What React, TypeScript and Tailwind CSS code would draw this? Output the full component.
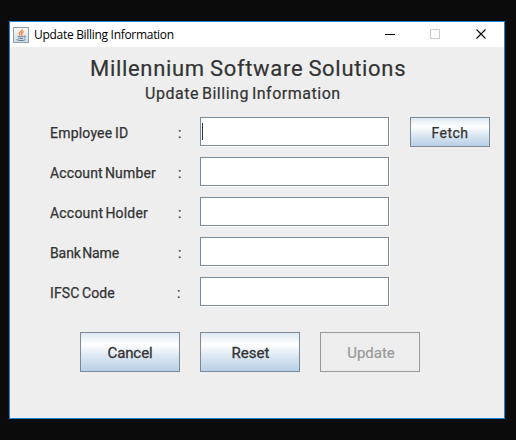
import React from "react";

type Field = { label: string; spacing: string; colon: string; focused?: boolean };

const fields: Field[] = [
  { label: "Employee ID", spacing: "tracking-[0.2px] [word-spacing:-1px]", colon: "w-[128px]", focused: true },
  { label: "Account Number", spacing: "tracking-[0.15px] [word-spacing:-1.5px]", colon: "w-[128px]" },
  { label: "Account Holder", spacing: "tracking-[0.2px] [word-spacing:-1.5px]", colon: "w-[128px]" },
  { label: "Bank Name", spacing: "tracking-[-0.1px] [word-spacing:-2px]", colon: "w-[128px]" },
  { label: "IFSC Code", spacing: "tracking-[0.1px] [word-spacing:-1px]", colon: "w-[127px]" },
];

const metal =
  "border border-[#7a8a99] bg-[linear-gradient(to_bottom,#dde8f3_0%,#ffffff_30%,#dde8f3_60%,#b8cfe5_100%)]";

function JavaIcon() {
  return (
    <svg className="block h-4 w-4" viewBox="0 0 16 16" fill="none">
      <defs>
        <linearGradient id="tile" x1="0" y1="0" x2="0" y2="1">
          <stop offset="0" stopColor="#fafafa" />
          <stop offset="1" stopColor="#d3dbe1" />
        </linearGradient>
      </defs>
      <rect x="0.5" y="0.5" width="15" height="15" fill="url(#tile)" stroke="#8c9fae" />
      <path d="M9.400 2.300C9.800 4 6 4.800 6.200 6.500c.1.8.9 1.200 1.300 1.900M10.700 4.600C8.800 5.400 8 6.200 8.800 7.200c.4.5.3.9-.2 1.400" stroke="#ee7d2d" strokeWidth="1.300" />
      <path d="M4.500 9.300c1.500.7 4.500.7 6.200 0M5.300 11.200c1.500.5 3.500.5 4.800 0M3.500 12.600c2 1.200 7 1.200 8.900.1M11 9c1.800-.5 2.300 1.200.2 2" stroke="#567b98" />
    </svg>
  );
}

export default function App() {
  return (
    <div className="h-[440px] w-[516px] overflow-hidden bg-[#0b0b0b] pt-[21px] pl-[9px] font-['Roboto',sans-serif] text-[#333333]">
      <div className="flex h-[398px] w-[496px] flex-col border border-[#1883d7] bg-[#eeeeee]">
        <header className="flex h-[25px] shrink-0 items-center bg-white pl-[3px]">
          <JavaIcon />
          <span className="ml-[5px] flex-1 whitespace-nowrap font-['Open_Sans',sans-serif] text-[12px] leading-[16px] tracking-[-0.3px] text-black">
            Update Billing Information
          </span>
          <svg className="h-[25px] w-[120px]" viewBox="0 0 120 25" shapeRendering="crispEdges" fill="none">
            <path d="M1 12.500h10" stroke="#000000" />
            <rect x="46.500" y="7.500" width="9" height="9" stroke="#cccccc" />
            <path d="M92.500 7.500l9 9M101.500 7.500l-9 9" stroke="#000000" strokeWidth="1.100" shapeRendering="auto" />
          </svg>
        </header>

        <div className="h-[70px] shrink-0 whitespace-nowrap [-webkit-text-stroke:0.2px_#333333]">
          <h1 className="pt-[7px] pl-[80px] text-[22px] leading-[30px] tracking-[0.68px] [word-spacing:-1px]">
            Millennium Software Solutions
          </h1>
          <h2 className="-mt-px pl-[135px] text-[16px] leading-[22px] tracking-[0.52px] [word-spacing:-1.5px]">
            Update Billing Information
          </h2>
        </div>

        <div className="flex shrink-0 flex-col gap-[10px] pl-[40px]">
          {fields.map((f) => (
            <div key={f.label} className="flex h-[30px] items-center text-[14px] [-webkit-text-stroke:0.25px_#333333]">
              <div className={`${f.colon} whitespace-nowrap pt-[2px] ${f.spacing}`}>{f.label}</div>
              <div className={`${f.colon === "w-[127px]" ? "w-[23px]" : "w-[22px]"} pt-[2px]`}>:</div>
              <div className="h-[30px] w-[190px] border-r border-b border-white">
                <div className="h-[29px] w-[189px] border border-[#7a8a99] bg-white pt-[5px] pl-px">
                  {f.focused && <div className="h-[17px] w-px bg-[#333333]" />}
                </div>
              </div>
              {f.focused && (
                <button className={`ml-[20px] h-[30px] w-[80px] pt-[2px] text-[14px] tracking-[0.5px] ${metal}`}>
                  Fetch
                </button>
              )}
            </div>
          ))}
        </div>

        <div className="mt-[25px] flex gap-[20px] pl-[70px] text-[15px]">
          <button className={`h-[40px] w-[100px] pt-[2px] tracking-[-0.1px] [-webkit-text-stroke:0.3px_#333333] ${metal}`}>Cancel</button>
          <button className={`h-[40px] w-[100px] pt-[2px] pl-[1px] [-webkit-text-stroke:0.3px_#333333] ${metal}`}>Reset</button>
          <button disabled className="h-[40px] w-[100px] border border-[#999999] pt-[2px] pl-[2px] text-[#999999] [-webkit-text-stroke:0.2px_#999999]">
            Update
          </button>
        </div>
      </div>
    </div>
  );
}
